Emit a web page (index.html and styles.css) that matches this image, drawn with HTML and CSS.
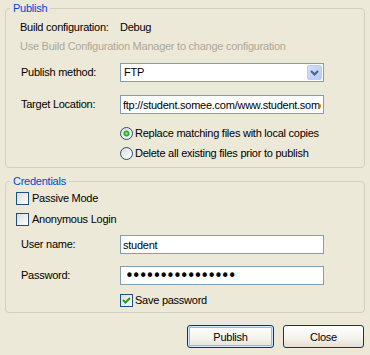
FILE: index.html
```html
<!DOCTYPE html>
<html lang="en">
<head>
   <meta charset="UTF-8">
   <meta name="viewport" content="width=device-width, initial-scale=1.0">
   <link rel="stylesheet" href="styles.css">
</head>
<body>
   <div class="dialog">
      <fieldset class="group publish">
         <legend>Publish</legend>
         <div class="row info">
            <span class="label">Build configuration:</span>
            <span>Debug</span>
         </div>
         <div class="row hint">Use Build Configuration Manager to change configuration</div>
         <div class="row field method">
            <label class="label" for="method">Publish method:</label>
            <div class="combo" id="method">
               <span class="combo-text">FTP</span>
               <span class="combo-btn">
                  <svg width="9" height="6" viewBox="0 0 9 6"><path d="M1 1 L4.5 4.5 L8 1" fill="none" stroke="#4D6185" stroke-width="2"/></svg>
               </span>
            </div>
         </div>
         <div class="row field target">
            <label class="label" for="target">Target Location:</label>
            <input class="textbox" id="target" type="text" value="ftp://student.somee.com/www.student.somee.com" readonly>
         </div>
         <div class="row option first">
            <span class="radio checked"></span>
            <span class="option-text">Replace matching files with local copies</span>
         </div>
         <div class="row option">
            <span class="radio"></span>
            <span class="option-text">Delete all existing files prior to publish</span>
         </div>
      </fieldset>

      <fieldset class="group credentials">
         <legend>Credentials</legend>
         <div class="row check-row passive">
            <span class="check"></span>
            <span class="check-text">Passive Mode</span>
         </div>
         <div class="row check-row anon">
            <span class="check"></span>
            <span class="check-text">Anonymous Login</span>
         </div>
         <div class="row field user">
            <label class="label" for="user">User name:</label>
            <input class="textbox" id="user" type="text" value="student" readonly>
         </div>
         <div class="row field pass">
            <label class="label" for="pass">Password:</label>
            <input class="textbox password" id="pass" type="password" value="studentpassword1" readonly>
         </div>
         <div class="row option save">
            <span class="check">
               <svg width="11" height="11" viewBox="0 0 11 11"><path d="M2 5 L4.5 7.5 L9 3" fill="none" stroke="#21A121" stroke-width="2"/></svg>
            </span>
            <span class="check-text">Save password</span>
         </div>
      </fieldset>

      <div class="buttons">
         <button class="btn default">Publish</button>
         <button class="btn close">Close</button>
      </div>
   </div>
</body>
</html>
```

FILE: styles.css
```css
body {
   margin: 0;
   background-color: #ece9d8;
   font-family: "Liberation Sans", Arial, sans-serif;
   font-size: 11px;
   line-height: 13px;
   letter-spacing: -0.25px;
   color: #000;
}
.dialog {
   width: 370px;
   height: 355px;
   overflow: hidden;
}
.group {
   margin: 2px 5px 0;
   padding: 0 0 5px 0;
   border: 1px solid #d0d0bf;
   border-radius: 4px;
   min-width: 0;
}
.group legend {
   margin-left: 4px;
   padding: 0 3px;
   color: #0046d5;
   line-height: 13px;
}
.credentials {
   margin-top: 7px;
   padding-bottom: 3px;
}
.row {
   display: flex;
   align-items: center;
   padding-left: 14px;
}
.label {
   width: 100px;
   flex: none;
}
.field .label {
   padding-left: 1px;
   width: 99px;
}
.info {
   height: 18px;
   margin-top: 3px;
}
.hint {
   height: 18px;
   margin-top: 1px;
   color: #aca899;
}
.method {
   margin-top: 8px;
}
.target {
   margin-top: 13px;
}
.option {
   height: 18px;
   padding-left: 114px;
   margin-top: 2px;
}
.option.first {
   margin-top: 10px;
}
.combo, .textbox {
   box-sizing: border-box;
   width: 204px;
   height: 19px;
   border: 1px solid #7f9db9;
   background-color: #fff;
}
.combo {
   display: flex;
   align-items: center;
   justify-content: space-between;
   padding: 1px;
}
.combo-text {
   padding-left: 2px;
}
.combo-btn {
   display: flex;
   align-items: center;
   justify-content: center;
   box-sizing: border-box;
   width: 15px;
   height: 15px;
   border: 1px solid #b9cdf6;
   border-radius: 2px;
   background: linear-gradient(135deg, #d4e0fc, #b7c9f5);
}
.textbox {
   margin: 0;
   padding: 0 2px;
   font-family: inherit;
   font-size: 11px;
   letter-spacing: -0.25px;
   color: #000;
   outline: none;
}
.password {
   padding-left: 4px;
   font-family: "DejaVu Sans", sans-serif;
   font-size: 15px;
   letter-spacing: -2px;
}
.radio {
   box-sizing: border-box;
   width: 13px;
   height: 13px;
   border: 1px solid #1c5180;
   border-radius: 50%;
   background: linear-gradient(135deg, #dcdcd7, #fff);
   flex: none;
}
.radio.checked {
   background: radial-gradient(circle, #8ef08e 0, #21a121 2.5px, transparent 3.5px),
      linear-gradient(135deg, #dcdcd7, #fff);
}
.option-text, .check-text {
   margin-left: 2px;
}
.check {
   display: flex;
   align-items: center;
   justify-content: center;
   box-sizing: border-box;
   width: 13px;
   height: 13px;
   border: 1px solid #1c5180;
   background: linear-gradient(135deg, #dcdcd7, #fff);
   flex: none;
}
.check-row {
   height: 17px;
   padding-left: 10px;
}
.check-row .check-text {
   margin-left: 3px;
}
.passive {
   margin-top: 2px;
}
.anon {
   margin-top: 4px;
}
.user {
   margin-top: 7px;
}
.pass {
   margin-top: 12px;
}
.save {
   height: 17px;
   margin-top: 7px;
}
.buttons {
   display: flex;
   justify-content: flex-end;
   gap: 9px;
   margin-top: 12px;
   padding-right: 6px;
}
.btn {
   box-sizing: border-box;
   width: 87px;
   height: 23px;
   border: 1px solid #003c74;
   border-radius: 3px;
   background: linear-gradient(#fff, #f3f2ec 60%, #e3e0d2);
   font-family: inherit;
   font-size: 11px;
   letter-spacing: -0.25px;
   color: #000;
   padding: 0;
}
.btn.default {
   box-shadow: inset 0 0 0 1px #cee7ff, inset 0 0 0 2px #98b8ea;
}
.btn.close {
   width: 81px;
}
```
